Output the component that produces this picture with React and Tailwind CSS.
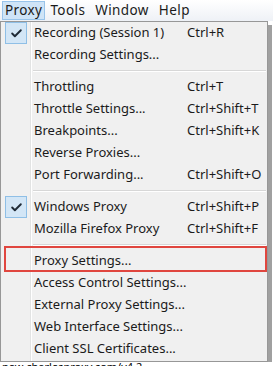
import { Check } from "lucide-react";

const font = { fontFamily: '"Segoe UI", "Noto Sans", sans-serif' };

const groups = [
  [
    { label: "Recording (Session 1)", key: "Ctrl+R", checked: true },
    { label: "Recording Settings..." },
  ],
  [
    { label: "Throttling", key: "Ctrl+T" },
    { label: "Throttle Settings...", key: "Ctrl+Shift+T" },
    { label: "Breakpoints...", key: "Ctrl+Shift+K" },
    { label: "Reverse Proxies..." },
    { label: "Port Forwarding...", key: "Ctrl+Shift+O" },
  ],
  [
    { label: "Windows Proxy", key: "Ctrl+Shift+P", checked: true },
    { label: "Mozilla Firefox Proxy", key: "Ctrl+Shift+F" },
  ],
  [
    { label: "Proxy Settings...", marked: true },
    { label: "Access Control Settings..." },
    { label: "External Proxy Settings..." },
    { label: "Web Interface Settings..." },
    { label: "Client SSL Certificates..." },
  ],
];

function Item({ item }) {
  return (
    <div className="relative flex h-[22px] items-center whitespace-nowrap">
      <div className="flex w-[30px] shrink-0 justify-center">
        {item.checked && (
          <div className="flex h-[22px] w-[22px] items-center justify-center border border-[#8fbfe6] bg-[#d3e6f6]">
            <Check size={13} strokeWidth={3.5} className="text-[#1f2a36]" />
          </div>
        )}
      </div>
      <span className="w-[156px] shrink-0 pl-[3px]">{item.label}</span>
      <span>{item.key}</span>
      {item.marked && (
        <div className="absolute left-[3px] top-[-4px] h-[26px] w-[263px] border-2 border-[#e0463f]" />
      )}
    </div>
  );
}

export default function App() {
  return (
    <div className="h-[366px] w-[273px] overflow-hidden bg-white text-[13px] text-[#1b1b1b]" style={font}>
      {/* menu bar */}
      <div className="flex h-[21px] items-center bg-gradient-to-b from-white to-[#eef1f6] px-[2px] text-[13.5px] tracking-[0.4px]">
        <span className="flex h-[19px] items-center border border-[#99c4ea] bg-[#cfe4f7] px-[2px]">Proxy</span>
        <span className="px-[5px]">Tools</span>
        <span className="px-[5px]">Window</span>
        <span className="px-[5px]">Help</span>
      </div>

      {/* dropdown */}
      <div className="flex">
        <div className="relative h-[341px] w-[268px] border border-[#979797] bg-[#f0f0f0]">
          <div className="absolute left-[29px] top-0 h-full w-[2px] border-l border-[#e2e3e3] bg-white" />
          {groups.map((g, gi) => (
            <div key={gi}>
              {gi > 0 && (
                <div className="flex h-[10px] items-center pl-[32px] pr-[1px]">
                  <div className="h-[2px] w-full border-t border-[#d7d7d7] bg-white" />
                </div>
              )}
              {g.map((item) => (
                <Item key={item.label} item={item} />
              ))}
            </div>
          ))}
        </div>
        <div className="mt-[4px] h-[337px] w-[4px] bg-[#a0a0a0]" />
      </div>

      <div className="-mt-[1px] pl-[2px] text-[11px] leading-none text-black">new charlesproxy.com/v4.2</div>
    </div>
  );
}
